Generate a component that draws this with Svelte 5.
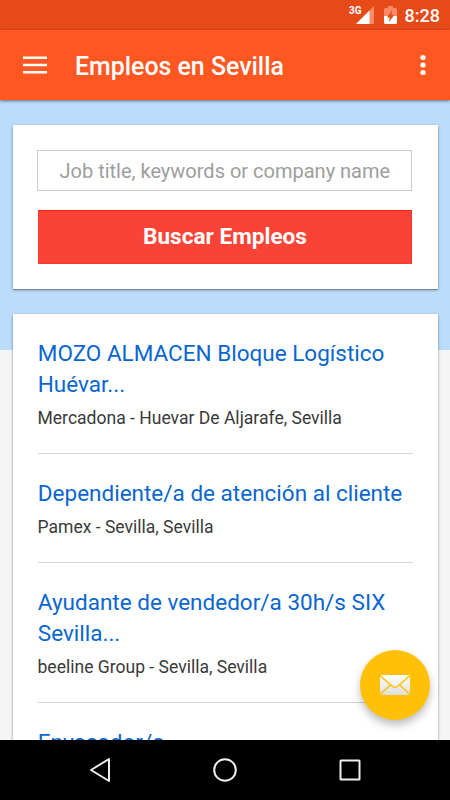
<script>
  const jobs = [
    { lines: ['MOZO ALMACEN Bloque Logístico', 'Huévar...'], place: 'Mercadona - Huevar De Aljarafe, Sevilla' },
    { lines: ['Dependiente/a de atención al cliente'], place: 'Pamex - Sevilla, Sevilla' },
    { lines: ['Ayudante de vendedor/a 30h/s SIX', 'Sevilla...'], place: 'beeline Group - Sevilla, Sevilla' },
    { lines: ['Envasador/a'], place: '' }
  ];
</script>

<div class="screen">
  <div class="status">
    <span class="net">3G</span>
    <svg class="signal" width="18" height="18" viewBox="0 0 18 18">
      <path d="M18 0V18H0Z" fill="#ff8a65" />
      <path d="M13.500 4.500V18H0Z" fill="#fff" />
    </svg>
    <svg class="battery" width="13" height="18" viewBox="0 0 13 18">
      <path d="M4 0h5v2h2.500q1.500 0 1.500 1.500V10H0V3.500Q0 2 1.500 2H4Z" fill="#ff8a65" />
      <path d="M0 10h13v6.500q0 1.500-1.500 1.500h-10Q0 18 0 16.500Z" fill="#fff" />
      <path d="M8.300 4L3 11.500h2.800L4.800 16.300L10.200 9H7.300Z" fill="#e64a19" />
    </svg>
    <span class="clock">8:28</span>
  </div>

  <header>
    <svg class="menu" width="24" height="18" viewBox="0 0 24 18">
      <path d="M0 1.750H24M0 9H24M0 16.250H24" stroke="#fff" stroke-width="2.500" />
    </svg>
    <h1>Empleos en Sevilla</h1>
    <svg class="more" width="6" height="22" viewBox="0 0 6 22">
      <circle cx="3" cy="3.500" r="2.600" fill="#fff" />
      <circle cx="3" cy="11" r="2.600" fill="#fff" />
      <circle cx="3" cy="18.500" r="2.600" fill="#fff" />
    </svg>
  </header>

  <main>
    <form class="card search" onsubmit={(e) => e.preventDefault()}>
      <input type="text" placeholder="Job title, keywords or company name" />
      <button type="submit"><span>Buscar Empleos</span></button>
    </form>
    <section class="card list">
      {#each jobs as job}
        <article>
          <h2>{#each job.lines as line}<span>{line}</span>{/each}</h2>
          {#if job.place}<p>{job.place}</p>{/if}
        </article>
      {/each}
    </section>
  </main>

  <button class="fab" aria-label="Mail">
    <svg width="30" height="20" viewBox="0 0 30 20">
      <defs>
        <linearGradient id="paper" x1="0" y1="0" x2="0" y2="1">
          <stop offset="0" stop-color="#fff" />
          <stop offset="1" stop-color="#dedede" />
        </linearGradient>
      </defs>
      <rect width="30" height="20" rx="0.500" fill="url(#paper)" />
      <path d="M0 0.500L12.200 11.200Q15 13.600 17.800 11.200L30 0.500M0 19.500L10.600 9.800M30 19.500L19.400 9.800" fill="none" stroke="#ffc107" stroke-width="1.500" />
    </svg>
  </button>

  <nav>
    <svg width="450" height="60" viewBox="0 0 450 60" fill="none" stroke="#eee" stroke-width="2" stroke-linejoin="round">
      <path d="M109 19V41L91 30Z" />
      <circle cx="225" cy="30" r="10.800" />
      <rect x="340.500" y="20.500" width="19" height="19" rx="0.500" />
    </svg>
  </nav>
</div>

<style>
  :global(body) { margin: 0; }
  .screen {
    position: relative;
    width: 450px;
    height: 800px;
    overflow: hidden;
    display: flex;
    flex-direction: column;
    background: #f5f5f5;
    font-family: Roboto, "Liberation Sans", sans-serif;
  }
  .status {
    height: 30px;
    flex: none;
    box-sizing: border-box;
    padding-right: 10px;
    display: flex;
    align-items: center;
    justify-content: flex-end;
    background: #e64a19;
    color: #fff;
  }
  .net { font-size: 10px; font-weight: 700; line-height: 10px; margin: 0 -6px 8px 0; }
  .signal { margin-right: 10px; }
  .battery { margin-right: 8px; }
  .clock { font-size: 18px; font-weight: 500; line-height: 30px; margin-top: 1px; }
  header {
    height: 70px;
    flex: none;
    box-sizing: border-box;
    padding: 0 24.500px 0 23px;
    display: flex;
    align-items: center;
    background: #ff5722;
    box-shadow: 0 1px 3px rgba(0, 0, 0, 0.5);
    z-index: 1;
  }
  h1 {
    flex: 1;
    margin: 3px 0 0 28px;
    color: #fff;
    font-size: 24.900px;
    font-weight: 500;
    line-height: 30px;
    white-space: nowrap;
  }
  main {
    flex: 1;
    min-height: 0;
    overflow: hidden;
    box-sizing: border-box;
    padding: 25px 12.500px 0;
    display: flex;
    flex-direction: column;
    gap: 25px;
    background: linear-gradient(#bbdcfb 250px, #f5f5f5 250px);
  }
  .card {
    flex: none;
    box-sizing: border-box;
    padding: 0 25px;
    background: #fff;
    box-shadow: 0 1px 3px rgba(0, 0, 0, 0.32), 0 1px 1px rgba(0, 0, 0, 0.22);
  }
  .search {
    height: 164px;
    padding: 25px 25.500px 0 24.500px;
    display: flex;
    flex-direction: column;
    gap: 19px;
  }
  input {
    box-sizing: border-box;
    width: 100%;
    height: 41px;
    padding: 0 21.500px;
    border: 1px solid #ccc;
    border-radius: 0;
    font: 400 20px Roboto, "Liberation Sans", sans-serif;
    outline: 0;
  }
  input::placeholder { color: #9e9e9e; opacity: 1; }
  .search button {
    height: 54px;
    margin-left: 1px;
    padding: 0 0 2px;
    border: 1px solid #fc3a28;
    border-top-color: #ff2410;
    background: #f94336;
    color: #fff;
    font: 700 22.600px Roboto, "Liberation Sans", sans-serif;
  }
  article {
    box-sizing: border-box;
    padding: 24px 0 23px;
    border-bottom: 1px solid #d5d5d5;
  }
  article:nth-child(2) { padding-bottom: 22.500px; }
  h2 {
    margin: 0;
    padding-left: 0.300px;
    color: #0a66d0;
    font-size: 22.500px;
    font-weight: 400;
    line-height: 31px;
    white-space: nowrap;
  }
  h2 span { display: block; }
  p {
    margin: 6px 0 0;
    color: #3a3a3a;
    font-size: 17.550px;
    line-height: 24px;
    white-space: nowrap;
  }
  .fab {
    position: absolute;
    left: 360px;
    top: 650px;
    width: 70px;
    height: 70px;
    padding: 0;
    border: 0;
    border-radius: 50%;
    display: flex;
    align-items: center;
    justify-content: center;
    background: #ffc107;
    box-shadow: 0 5px 9px rgba(0, 0, 0, 0.26);
  }
  nav { height: 60px; flex: none; background: #000; }
  nav svg { display: block; }
</style>
